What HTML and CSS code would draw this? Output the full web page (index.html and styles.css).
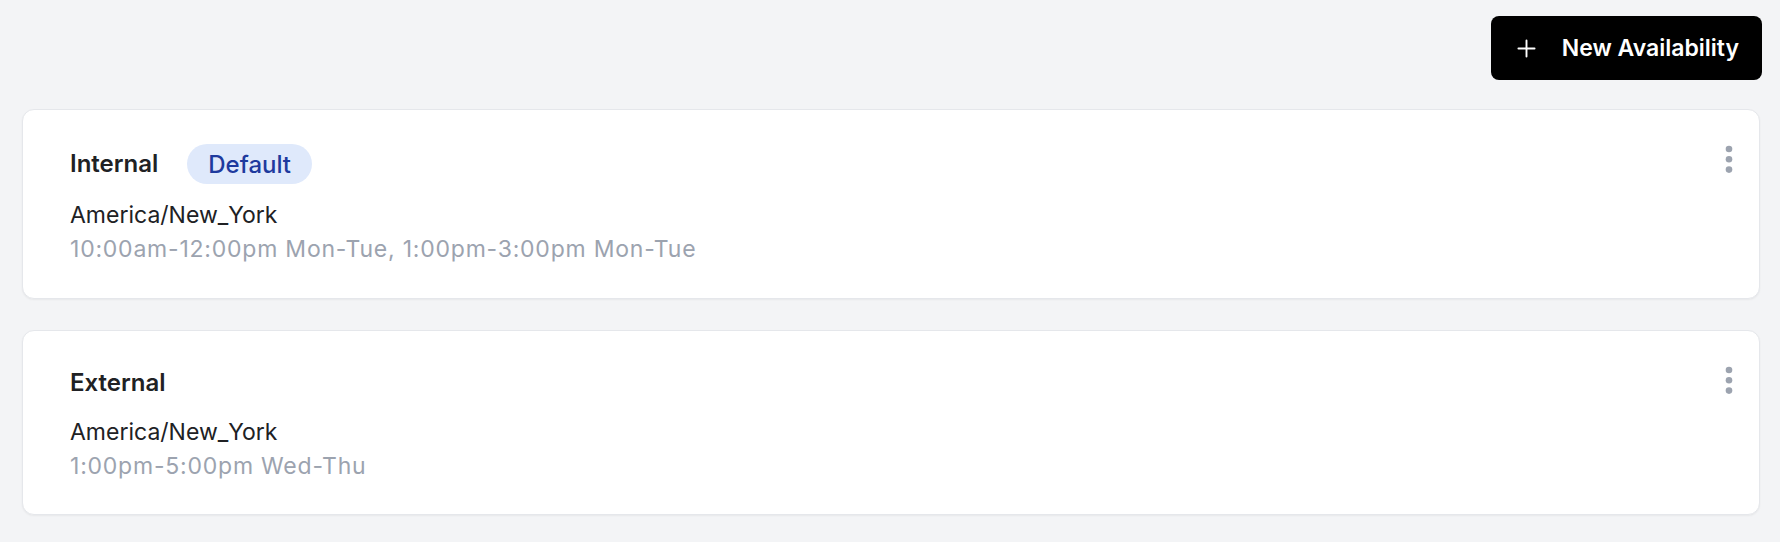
FILE: index.html
```html
<!DOCTYPE html>
<html lang="en">
<head>
<meta charset="utf-8">
<title>Availability</title>
<link rel="stylesheet" href="styles.css">
</head>
<body>
<main class="page">
  <div class="toolbar">
    <button class="btn-primary" type="button">
      <svg class="btn-icon" viewBox="0 0 20 20" aria-hidden="true"><path d="M10 1.5v17M1.5 10h17" stroke="currentColor" stroke-width="2" stroke-linecap="round" fill="none"/></svg>
      <span>New Availability</span>
    </button>
  </div>
  <section class="list">
    <article class="card">
      <div class="card-body">
        <div class="title-row">
          <h2 class="title">Internal</h2>
          <span class="badge">Default</span>
        </div>
        <p class="tz">America/New_York</p>
        <p class="hours">10:00am-12:00pm Mon-Tue, 1:00pm-3:00pm Mon-Tue</p>
      </div>
      <button class="menu" type="button" aria-label="More options">
        <svg viewBox="0 0 8 28" aria-hidden="true"><circle cx="4" cy="4" r="3.3"/><circle cx="4" cy="14.3" r="3.3"/><circle cx="4" cy="24.6" r="3.3"/></svg>
      </button>
    </article>
    <article class="card">
      <div class="card-body">
        <div class="title-row">
          <h2 class="title">External</h2>
        </div>
        <p class="tz">America/New_York</p>
        <p class="hours">1:00pm-5:00pm Wed-Thu</p>
      </div>
      <button class="menu" type="button" aria-label="More options">
        <svg viewBox="0 0 8 28" aria-hidden="true"><circle cx="4" cy="4" r="3.3"/><circle cx="4" cy="14.3" r="3.3"/><circle cx="4" cy="24.6" r="3.3"/></svg>
      </button>
    </article>
  </section>
</main>
</body>
</html>
```

FILE: styles.css
```css
* { box-sizing: border-box; }
html, body { margin: 0; padding: 0; }
body {
  background: #f3f4f6;
  font-family: Inter, "Noto Sans", "Liberation Sans", sans-serif;
  color: #202124;
  width: 1780px;
  height: 542px;
  overflow: hidden;
}
.page {
  padding: 16px 20px 0 22px;
}
.toolbar {
  display: flex;
  justify-content: flex-end;
  margin-bottom: 29px;
  margin-right: -2px;
}
.btn-primary {
  display: flex;
  align-items: center;
  gap: 26px;
  height: 64px;
  padding: 0 23px 0 26px;
  background: #000;
  color: #fff;
  border: 0;
  border-radius: 8px;
  font-family: inherit;
  font-size: 23px;
  font-weight: 600;
  cursor: pointer;
}
.btn-icon { width: 19px; height: 19px; flex: none; }
.list {
  display: flex;
  flex-direction: column;
  gap: 31px;
}
.card {
  display: flex;
  justify-content: space-between;
  align-items: flex-start;
  background: #fff;
  border: 1px solid #e5e7eb;
  border-radius: 12px;
  box-shadow: 0 1px 2px rgba(0,0,0,0.05);
  padding: 34px 26px 34.5px 47px;
}
.title-row {
  display: flex;
  align-items: center;
  gap: 29px;
  min-height: 36px;
}
.title {
  margin: 0;
  font-size: 24px;
  font-weight: 600;
  line-height: 28px;
  color: #202124;
}
.badge {
  display: inline-flex;
  align-items: center;
  height: 40px;
  padding: 0 21px;
  border-radius: 20px;
  background: #dfe9fb;
  color: #1e3a9e;
  font-size: 24px;
  font-weight: 500;
}
.tz {
  margin: 17px 0 0;
  font-size: 23px;
  line-height: 28px;
  color: #202124;
}
.hours {
  margin: 6px 0 0;
  font-size: 23px;
  line-height: 28px;
  letter-spacing: 0.78px;
  color: #9ca3af;
}
.menu {
  margin-top: 1px;
  padding: 0;
  border: 0;
  background: none;
  width: 8px;
  height: 28px;
  cursor: pointer;
}
.menu svg { width: 8px; height: 28px; fill: #9ca3af; display: block; }
```
